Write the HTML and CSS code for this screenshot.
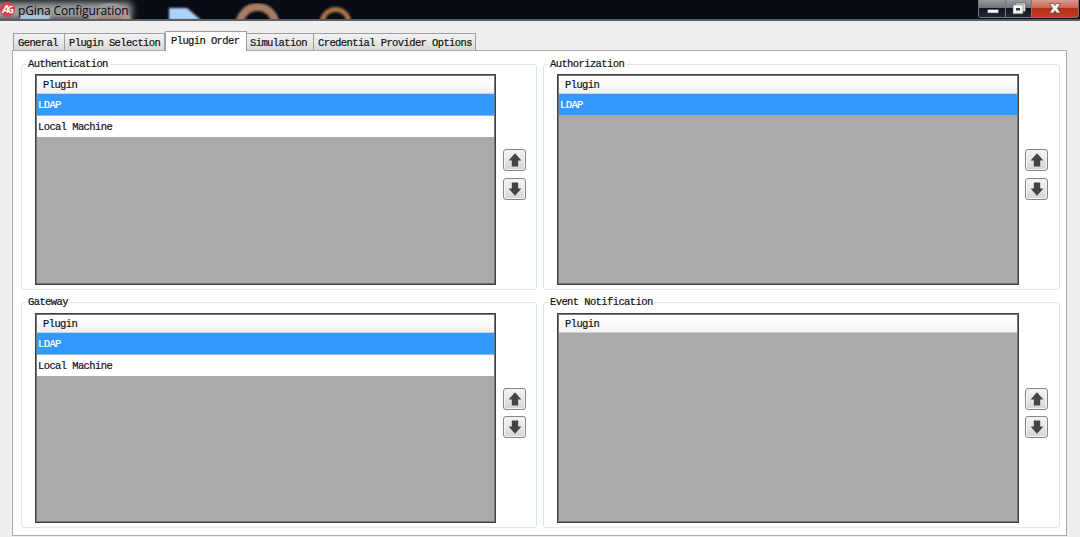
FILE: index.html
```html
<!DOCTYPE html>
<html lang="en">
<head>
<meta charset="utf-8">
<title>pGina Configuration</title>
<link rel="stylesheet" href="styles.css">
</head>
<body>
<svg width="0" height="0" class="defs"><defs>
<symbol id="arrow" viewBox="0 0 14 14"><path d="M7 .2 13.400 7.500H10.200V13.600H3.800V7.500H.6Z" fill="#444"/></symbol>
</defs></svg>
<div class="window">
<header class="titlebar">
<svg class="backdrop" width="1080" height="19" viewBox="0 0 1080 19">
<defs>
<filter id="soft"><feGaussianBlur stdDeviation="1"/></filter>
<filter id="glow" x="-20%" y="-80%" width="140%" height="260%"><feGaussianBlur stdDeviation="3.500"/></filter>
</defs>
<rect width="1080" height="19" fill="#080c14"/>
<g filter="url(#soft)">
<path d="M169 8H187L201 20H169Z" fill="#aed3fb"/>
<circle cx="257.500" cy="25" r="18" fill="none" stroke="#a77d63" stroke-width="8"/>
<circle cx="335.500" cy="23" r="13.500" fill="none" stroke="#a57445" stroke-width="5"/>
<circle cx="110" cy="25" r="18" fill="none" stroke="#c79676" stroke-width="8"/>
</g>
<rect x="-10" y="2" width="142" height="18" rx="5" fill="#9a9c9d" filter="url(#glow)"/>
<path d="M20 14H50V20H20Z" fill="#a8c4df" filter="url(#soft)"/>
<path d="M88 20Q110 8 132 20Z" fill="#b79480" opacity=".65" filter="url(#soft)"/>
</svg>
<svg class="logo" width="16" height="18" viewBox="0 0 16 18"><circle cx="7.500" cy="9.500" r="7.500" fill="#d94049"/><path d="M2.200 13 6.200 6H7.500V13M4 10.800H7M12.600 6.500H10.500Q8.800 7 8.800 9.500T10.300 12.500H12.500V9.800H10.500" fill="none" stroke="#fff3f3" stroke-width="1.600"/></svg>
<h1 class="title">pGina Configuration</h1>
<div class="controls">
<span class="control min"><svg width="27" height="17" viewBox="0 0 27 17"><rect x="8.500" y="9.500" width="11" height="3.500" fill="#fff" stroke="#4b5058" stroke-width=".7"/></svg></span>
<span class="control max"><svg width="26" height="17" viewBox="0 0 26 17"><path d="M9.500 3H19.500V11.500H9.500Z" fill="#d8dadd" stroke="#555" stroke-width=".6"/><path d="M7 4.800H17V13.800H7Z" fill="#f4f4f5" stroke="#666" stroke-width=".6"/><path d="M10 8H14V10.500H10Z" fill="#333a46"/></svg></span>
<span class="control close"><svg width="46" height="17" viewBox="0 0 46 17"><path d="M17.500 3.500H21.500L23 5.700 24.500 3.500H28.500L25.400 8.200 28.500 13H24.500L23 10.700 21.500 13H17.500L20.600 8.200Z" fill="#f4f4f4" stroke="#6d4843" stroke-width=".8"/></svg></span>
</div>
</header>
<nav class="tabs">
<span class="tab general">General</span><span class="tab selection">Plugin Selection</span><span class="tab active">Plugin Order</span><span class="tab simulation">Simulation</span><span class="tab provider">Credential Provider Options</span>
</nav>
<main class="panel">
<section class="group">
<h2 class="legend">Authentication</h2>
<div class="content">
<div class="list"><div class="head">Plugin</div><div class="row selected">LDAP</div><div class="row">Local Machine</div></div>
<div class="order"><button class="move"><svg width="14" height="14"><use href="#arrow"/></svg></button><button class="move down"><svg width="14" height="14"><use href="#arrow"/></svg></button></div>
</div>
</section>
<section class="group">
<h2 class="legend">Authorization</h2>
<div class="content">
<div class="list"><div class="head">Plugin</div><div class="row selected">LDAP</div></div>
<div class="order"><button class="move"><svg width="14" height="14"><use href="#arrow"/></svg></button><button class="move down"><svg width="14" height="14"><use href="#arrow"/></svg></button></div>
</div>
</section>
<section class="group lower">
<h2 class="legend">Gateway</h2>
<div class="content">
<div class="list"><div class="head">Plugin</div><div class="row selected">LDAP</div><div class="row">Local Machine</div></div>
<div class="order"><button class="move"><svg width="14" height="14"><use href="#arrow"/></svg></button><button class="move down"><svg width="14" height="14"><use href="#arrow"/></svg></button></div>
</div>
</section>
<section class="group lower">
<h2 class="legend">Event Notification</h2>
<div class="content">
<div class="list"><div class="head">Plugin</div></div>
<div class="order"><button class="move"><svg width="14" height="14"><use href="#arrow"/></svg></button><button class="move down"><svg width="14" height="14"><use href="#arrow"/></svg></button></div>
</div>
</section>
</main>
</div>
</body>
</html>
```

FILE: styles.css
```css
* { box-sizing: border-box; }
body { margin: 0; background: #efefef; color: #111; font: 10.5px/12px "Liberation Mono", monospace; letter-spacing: -0.6px; -webkit-text-stroke: 0.2px currentColor; overflow: hidden; }
.defs { position: absolute; }
.window { display: flex; flex-direction: column; width: 1080px; height: 537px; }
.titlebar { position: relative; display: flex; height: 21px; border-bottom: 2px solid #5c5e61; flex: none; }
.backdrop { position: absolute; inset: 0; }
.logo { position: relative; margin-right: 2px; }
.title { position: relative; margin: 0; font: 12px/21px "Open Sans", "Noto Sans", sans-serif; letter-spacing: -0.12px; color: #08090b; -webkit-text-stroke: 0; }
.controls { position: relative; display: flex; height: 18px; width: 101px; margin-left: auto; margin-right: 1px; border: 1px solid #73777d; border-top: 0; border-radius: 0 0 3px 3px; overflow: hidden; }
.control { display: block; height: 17px; background: linear-gradient(#999b9d 0, #717477 45%, #10151d 50%, #222831 100%); }
.control svg { display: block; }
.min { width: 27px; border-right: 1px solid #747980; }
.max { width: 26px; border-right: 1px solid #92736f; }
.close { width: 46px; background: linear-gradient(#d89a8e 0, #c66858 45%, #b52d18 50%, #c33b20 100%); }
.tabs { display: flex; align-items: flex-end; height: 29px; flex: none; padding-left: 13px; }
.tab { height: 17px; border: 1px solid #9c9ea8; border-bottom: 0; border-left: 0; background: linear-gradient(#f1f1f1, #e9e9e9 48%, #d7d7d7); padding: 3px 0 0 4px; white-space: nowrap; }
.general { width: 52px; border-left: 1px solid #9c9ea8; }
.selection { width: 100px; }
.active { position: relative; width: 82px; height: 20px; margin-bottom: -1px; padding: 3px 0 0 5px; background: #fff; border-left: 1px solid #9c9ea8; }
.simulation { width: 67px; padding-left: 3px; }
.provider { width: 162px; }
.panel { display: grid; grid-template-columns: 516px 517px; grid-template-rows: 226px 226px; column-gap: 6px; row-gap: 12px; width: 1055px; height: 486px; margin-left: 12px; padding: 13px 0 0 8px; border: 1px solid #a8abb5; background: #fff; }
.group { border: 1px solid #dce6ed; border-radius: 3px; min-width: 0; }
.legend { width: fit-content; height: 12px; margin: -7px 0 0 4px; padding: 0 2px; background: #fff; font: inherit; }
.content { display: flex; height: 211px; margin: 4px 0 0 13px; }
.lower .content { height: 210px; margin-top: 5px; }
.list { width: 461px; border: 1px solid #3f3f3f; padding: 1px; box-shadow: inset 0 0 0 1px #777; background: #aaa; flex: none; }
.group:nth-child(even) .list { width: 462px; }
.head { height: 18px; padding: 3px 0 0 6px; background: linear-gradient(#fff, #fbfbfb 45%, #eef0f2); border-bottom: 1px solid #cdd2d8; }
.row { height: 21px; padding: 5px 0 0 1px; background: #fff; }
.row.selected { height: 22px; background: #3399ff; color: #fff; border-bottom: 1px solid #9eb0c2; }
.order { display: flex; flex-direction: column; gap: 7px; padding: 75px 0 0 7px; }
.group:nth-child(even) .order { padding-left: 6px; }
.lower .order { gap: 6px; }
.move { display: grid; place-items: center; width: 23px; height: 22px; padding: 0; border: 1px solid #858585; border-radius: 3px; background: linear-gradient(#f3f3f3, #e8e8e8 48%, #d3d3d3); box-shadow: inset 0 0 0 1px #f5f5f5; }
.down svg { transform: rotate(180deg); }
```
